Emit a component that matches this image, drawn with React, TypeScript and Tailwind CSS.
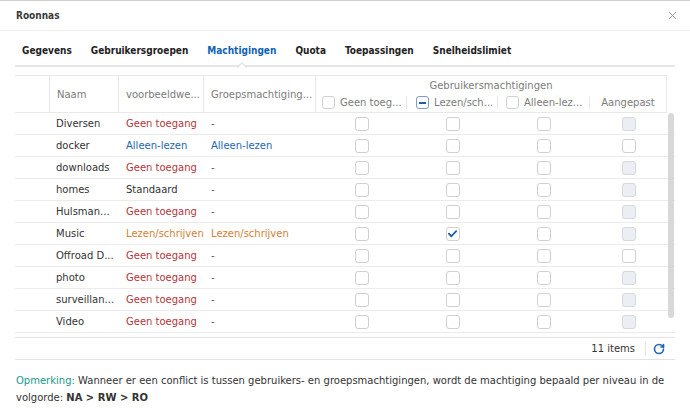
import { RotateCw, X } from "lucide-react";

type Level = "na" | "ro" | "rw" | "std" | "none";

type Share = {
  name: string;
  preview: Level;
  group: Level;
  checked?: boolean;
  custom?: boolean;
};

const shares: Share[] = [
  { name: "Diversen", preview: "na", group: "none" },
  { name: "docker", preview: "ro", group: "ro", custom: true },
  { name: "downloads", preview: "na", group: "none" },
  { name: "homes", preview: "std", group: "none" },
  { name: "Hulsman...", preview: "na", group: "none" },
  { name: "Music", preview: "rw", group: "rw", checked: true },
  { name: "Offroad D...", preview: "na", group: "none", custom: true },
  { name: "photo", preview: "na", group: "none" },
  { name: "surveillan...", preview: "na", group: "none" },
  { name: "Video", preview: "na", group: "none" },
];

const levelText: Record<Level, { label: string; className: string }> = {
  na: { label: "Geen toegang", className: "text-[#b3353c]" },
  ro: { label: "Alleen-lezen", className: "text-[#1c66b2]" },
  rw: { label: "Lezen/schrijven", className: "text-[#d5802f]" },
  std: { label: "Standaard", className: "text-[#333]" },
  none: { label: "-", className: "text-[#555]" },
};

const tabs = ["Gegevens", "Gebruikersgroepen", "Machtigingen", "Quota", "Toepassingen", "Snelheidslimiet"];

const boldFont = "font-['DejaVu_Sans_Condensed','DejaVu_Sans',sans-serif] font-bold [font-stretch:condensed]";

function Box({ size = 14, disabled = false, checked = false, mixed = false }: { size?: number; disabled?: boolean; checked?: boolean; mixed?: boolean }) {
  const sizeCls = size === 14 ? "h-[14px] w-[14px]" : "h-[13px] w-[13px]";
  const tone = mixed
    ? "border-[#7c9ccb] bg-white"
    : disabled
    ? "border-[#d5d9df] bg-[#ebeef3]"
    : "border-[#d0d0d0] bg-white";
  return (
    <span className={`flex shrink-0 items-center justify-center rounded-[3px] border ${sizeCls} ${tone}`}>
      {checked && (
        <svg viewBox="0 0 12 12" className="h-[11px] w-[11px]">
          <path d="M2 6.2 4.8 9 10 3.4" fill="none" stroke="#1b5ea8" strokeWidth="2" strokeLinecap="round" strokeLinejoin="round" />
        </svg>
      )}
      {mixed && <span className="h-[2px] w-[7px] bg-[#1c5fa9]" />}
    </span>
  );
}

function Level({ level }: { level: Level }) {
  const t = levelText[level];
  return <span className={t.className}>{t.label}</span>;
}

export default function App() {
  return (
    <div className="h-[412px] w-[690px] overflow-hidden border-t border-[#cfcfcf] bg-white font-['DejaVu_Sans',Verdana,sans-serif] text-[10px] text-[#333]">
      {/* title */}
      <div className="flex h-[30px] items-center justify-between border-b border-[#efefef] pl-4 pr-[11px]">
        <span className={`${boldFont} text-[10px] text-[#3a3a3a]`}>Roonnas</span>
        <X className="h-[13px] w-[13px] text-[#8a8a8a]" strokeWidth={1.6} />
      </div>

      <div className="px-[15px]">
        {/* tabs */}
        <div className="relative flex items-center pl-[7px] pt-[13px] pb-[7px] border-b-2 border-[#e6e6e6]">
          {tabs.map((tab) => (
            <span
              key={tab}
              className={`${boldFont} mr-[19px] text-[10px] leading-[14px] ${tab === "Machtigingen" ? "relative text-[#0f63b6]" : "text-[#222]"}`}
            >
              {tab}
              {tab === "Machtigingen" && (
                <svg viewBox="0 0 10 6" className="absolute -bottom-[10px] left-1/2 h-[6px] w-[10px] -translate-x-1/2">
                  <polygon points="0,6 5,1 10,6" fill="#fff" />
                  <polyline points="0,5.5 5,1 10,5.5" fill="none" stroke="#e0e0e0" strokeWidth="1.3" />
                </svg>
              )}
            </span>
          ))}
        </div>

        {/* table */}
        <div className="relative mt-[8px]">
          {/* header */}
          <div className="flex h-[38px] text-[#7b7b7b]">
            <div className="flex flex-1 border-y border-[#e8e8e8]">
              <div className="w-[35px] border-r border-[#e8e8e8]" />
              <div className="flex w-[69px] items-center border-r border-[#e8e8e8] pl-[7px]">Naam</div>
              <div className="flex w-[85px] items-center border-r border-[#e8e8e8] pl-[7px]">voorbeeldwe...</div>
              <div className="flex w-[112px] items-center border-r border-[#e8e8e8] pl-[7px]">Groepsmachtiging...</div>
              <div className="flex w-[351px] flex-col border-r border-[#e8e8e8]">
                <div className="pt-[3px] text-center leading-[14px]">Gebruikersmachtigingen</div>
                <div className="flex flex-1 items-center">
                  <div className="flex w-[91px] items-center gap-[5px] border-r border-[#e8e8e8] pl-[6px] leading-[11px]">
                    <Box size={13} />
                    <span>Geen toeg...</span>
                  </div>
                  <div className="flex w-[91px] items-center gap-[5px] border-r border-[#e8e8e8] pl-[9px] leading-[11px]">
                    <Box size={13} mixed />
                    <span>Lezen/sch...</span>
                  </div>
                  <div className="flex w-[92px] items-center gap-[5px] border-r border-[#e8e8e8] pl-[8px] leading-[11px]">
                    <Box size={13} />
                    <span>Alleen-lez...</span>
                  </div>
                  <div className="flex flex-1 justify-center leading-[11px]">Aangepast</div>
                </div>
              </div>
            </div>
            <div className="w-[12px]" />
          </div>

          {/* rows */}
          {shares.map((s) => (
            <div key={s.name} className="flex h-[22px] items-center border-b border-[#ebebeb]">
              <div className="w-[35px]" />
              <div className="w-[69px] truncate pl-[6px]">{s.name}</div>
              <div className="w-[85px] whitespace-nowrap pl-[7px]">
                <Level level={s.preview} />
              </div>
              <div className="w-[112px] whitespace-nowrap pl-[7px]">
                <Level level={s.group} />
              </div>
              <div className="flex w-[91px] justify-center">
                <Box />
              </div>
              <div className="flex w-[91px] justify-center">
                <Box checked={s.checked} />
              </div>
              <div className="flex w-[92px] justify-center">
                <Box />
              </div>
              <div className="flex w-[77px] justify-center">
                <Box disabled={!s.custom} />
              </div>
            </div>
          ))}

          {/* scrollbar thumb */}
          <div className="absolute right-[1px] top-[38px] h-[205px] w-[6px] rounded-full bg-[#d8d8d8]" />

          {/* footer */}
          <div className="mt-[4px] flex h-[23px] items-center justify-end border-y border-[#e3e3e3] pr-[10px]">
            <span className="pr-[10px]">11 items</span>
            <span className="h-[14px] w-px bg-[#e3e3e3]" />
            <RotateCw className="ml-[7px] h-[12px] w-[12px] text-[#1c66b2]" strokeWidth={3.2} />
          </div>
        </div>
      </div>

      {/* note */}
      <div className="mt-[12px] pl-4 pr-5 leading-[17px]">
        <span className="text-[#179a8b]">Opmerking:</span>
        <span> Wanneer er een conflict is tussen gebruikers- en groepsmachtigingen, wordt de machtiging bepaald per niveau in de volgorde: </span>
        <b>NA &gt; RW &gt; RO</b>
      </div>
    </div>
  );
}
